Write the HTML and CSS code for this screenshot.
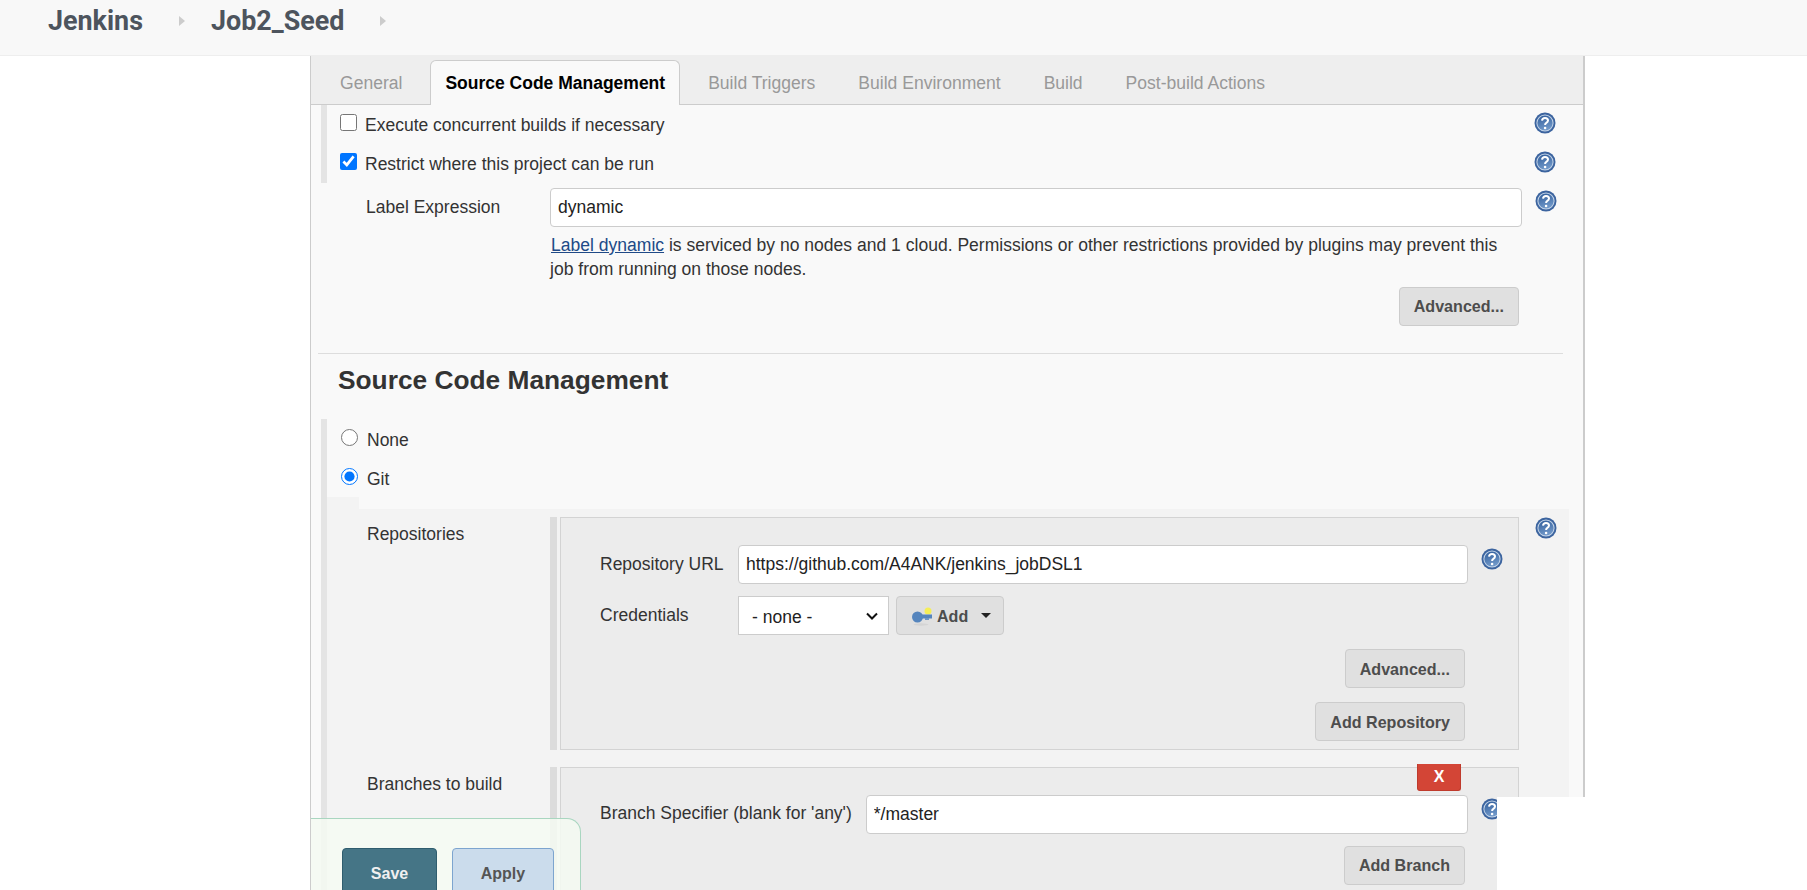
FILE: index.html
```html
<!DOCTYPE html>
<html lang="en">
<head>
<meta charset="utf-8">
<title>Job2_Seed Config</title>
<link rel="stylesheet" href="styles.css">
</head>
<body>
<svg class="defs" width="0" height="0" aria-hidden="true">
  <defs>
    <linearGradient id="helpfill" x1="0" y1="0" x2="0.3" y2="1">
      <stop offset="0" stop-color="#2f5c9a"/>
      <stop offset="1" stop-color="#6f97c8"/>
    </linearGradient>
    <symbol id="help" viewBox="0 0 22 22">
      <circle cx="11" cy="11" r="10.5" fill="#3c649f"/>
      <circle cx="11" cy="11" r="8.6" fill="#c5d5e8"/>
      <circle cx="11" cy="11" r="7.6" fill="url(#helpfill)"/>
      <path d="M8 8.6c.2-1.8 1.4-2.7 3-2.7 1.8 0 3 1 3 2.5 0 1.300-.8 1.900-1.700 2.500-.8.5-1.200 1-1.200 2" fill="none" stroke="#fff" stroke-width="2"/>
      <circle cx="11.100" cy="16" r="1.300" fill="#fff"/>
    </symbol>
  </defs>
</svg>

<header class="topbar">
  <span class="crumb">Jenkins</span>
  <i class="crumb-arrow"></i>
  <span class="crumb">Job2_Seed</span>
  <i class="crumb-arrow"></i>
</header>

<main class="panel">
  <nav class="tabs">
    <span class="tab">General</span>
    <span class="tab tab-active">Source Code Management</span>
    <span class="tab">Build Triggers</span>
    <span class="tab">Build Environment</span>
    <span class="tab">Build</span>
    <span class="tab">Post-build Actions</span>
  </nav>

  <section class="barred">
    <div class="option">
      <input class="check" type="checkbox">
      <span class="option-text">Execute concurrent builds if necessary</span>
      <svg class="help help-end"><use href="#help"/></svg>
    </div>
    <div class="option">
      <input class="check" type="checkbox" checked>
      <span class="option-text">Restrict where this project can be run</span>
      <svg class="help help-end"><use href="#help"/></svg>
    </div>
  </section>

  <section class="label-row">
    <label class="field-label">Label Expression</label>
    <div class="label-main">
      <input class="text-input" type="text" value="dynamic">
      <p class="note"><a href="#">Label dynamic</a> is serviced by no nodes and 1 cloud. Permissions or other restrictions provided by plugins may prevent this job from running on those nodes.</p>
      <div class="actions actions-label"><button class="btn">Advanced...</button></div>
    </div>
    <svg class="help"><use href="#help"/></svg>
  </section>

  <hr class="divider">
  <h2 class="section-title">Source Code Management</h2>

  <section class="barred scm">
    <div class="option">
      <input class="radio" type="radio" name="scm">
      <span class="option-text radio-text">None</span>
    </div>
    <div class="option">
      <input class="radio" type="radio" name="scm" checked>
      <span class="option-text radio-text">Git</span>
    </div>

    <div class="git">
      <div class="git-row">
        <span class="git-label">Repositories</span>
        <div class="box-wrap">
          <div class="box">
            <div class="inner-row">
              <span class="inner-label">Repository URL</span>
              <input class="text-input inner-input" type="text" value="https://github.com/A4ANK/jenkins_jobDSL1">
              <svg class="help help-inner"><use href="#help"/></svg>
            </div>
            <div class="inner-row inner-row-cred">
              <span class="inner-label">Credentials</span>
              <select class="select"><option>- none -</option></select>
              <button class="btn btn-add">
                <svg class="key" viewBox="0 0 20 19" aria-hidden="true">
                  <ellipse cx="9" cy="17.500" rx="7.500" ry="1.200" fill="#d4d4d4"/>
                  <circle cx="16" cy="4" r="3.500" fill="#f5ee58"/>
                  <circle cx="5.500" cy="10" r="5.500" fill="#5585bd"/>
                  <rect x="7" y="7.500" width="13" height="4" fill="#5585bd"/>
                  <rect x="13" y="11" width="4" height="2" fill="#6f97c8"/>
                </svg>
                <span>Add</span>
                <i class="caret"></i>
              </button>
            </div>
            <div class="actions actions-first"><button class="btn btn-low">Advanced...</button></div>
            <div class="actions actions-next"><button class="btn btn-low">Add Repository</button></div>
          </div>
        </div>
        <svg class="help"><use href="#help"/></svg>
      </div>

      <div class="git-row git-row-branch">
        <span class="git-label">Branches to build</span>
        <div class="box-wrap">
          <div class="box box-branch">
            <button class="delete">X</button>
            <div class="inner-row">
              <span class="inner-label-auto">Branch Specifier (blank for 'any')</span>
              <input class="text-input inner-input" type="text" value="*/master">
              <svg class="help help-inner"><use href="#help"/></svg>
            </div>
            <div class="actions actions-branch"><button class="btn">Add Branch</button></div>
          </div>
        </div>
      </div>
    </div>
  </section>
</main>

<div class="mask"></div>

<footer class="savebar">
  <button class="btn-save">Save</button>
  <button class="btn-apply">Apply</button>
</footer>
</body>
</html>
```

FILE: styles.css
```css
* { box-sizing: border-box; }
html, body { height: 890px; overflow: hidden; }
body {
  margin: 0;
  background: #fff;
  color: #333;
  font-family: "Liberation Sans", Arial, sans-serif;
  font-size: 17.5px;
  position: relative;
}
.defs { position: absolute; }

.topbar {
  height: 56px;
  background: #f8f8f8;
  border-bottom: 1px solid #eee;
  display: flex;
  align-items: flex-start;
  padding: 6px 0 0 48px;
}
.crumb {
  font-family: Roboto, "Liberation Sans", sans-serif;
  font-weight: 700;
  font-size: 26.9px;
  line-height: 30px;
  color: #4d545d;
}
.crumb-arrow {
  width: 0;
  height: 0;
  margin: 10px 26px 0 36px;
  border-left: 6px solid #ccc;
  border-top: 5px solid transparent;
  border-bottom: 5px solid transparent;
}

.panel {
  margin-left: 310px;
  width: 1275px;
  height: 834px;
  overflow: hidden;
  background: #f9f9f9;
  border-left: 1px solid #ccc;
  border-right: 2px solid #ccc;
}

.tabs {
  height: 49px;
  background: #eee;
  border-bottom: 1px solid #ccc;
  display: flex;
  padding: 4px 0 0 14px;
}
.tab {
  height: 45px;
  padding: 0 14px;
  margin-right: 13px;
  font-size: 17.55px;
  line-height: 45px;
  color: #999;
  border: 1px solid transparent;
  border-bottom: 0;
}
.tab-active {
  background: #f9f9f9;
  color: #000;
  font-size: 17.5px;
  font-weight: 700;
  border-color: #ccc;
  border-radius: 6px 6px 0 0;
}

.barred {
  margin-left: 10px;
  border-left: 6px solid #e4e4e4;
  padding-left: 0;
}
.option {
  height: 39px;
  padding: 9px 27px 0 13px;
  display: flex;
  align-items: flex-start;
}
.check {
  width: 17px;
  height: 17px;
  margin: 0 8px 0 0;
}
.radio {
  width: 17px;
  height: 17px;
  margin: 1px 9px 0 1px;
}
.option-text { line-height: 22px; }
.radio-text { padding-top: 1px; }

.help { width: 22px; height: 22px; flex: none; display: block; }
.help-end { margin: -2px 0 0 auto; }

.label-row {
  display: flex;
  align-items: flex-start;
  margin-top: 5px;
  padding-left: 55px;
}
.field-label {
  width: 184px;
  flex: none;
  line-height: 20px;
  padding-top: 9px;
}
.label-main { width: 972px; flex: none; margin-right: 13px; }
.label-row .help { margin-top: 2px; }

.text-input {
  display: block;
  width: 100%;
  height: 39px;
  padding: 0 7px;
  border: 1px solid #ccc;
  border-radius: 4px;
  background: #fff;
  color: #222;
  font: 17.5px "Liberation Sans", Arial, sans-serif;
}
.note { margin: 6px 0 0; font-size: 17.55px; line-height: 24px; text-indent: 1px; }
.note a { color: #204a87; }

.actions { display: flex; justify-content: flex-end; }
.actions-label { margin: 6px 3px 0 0; }

.btn {
  height: 39px;
  padding: 0 14px;
  background: #e0e0e0;
  border: 1px solid #ccc;
  border-radius: 4px;
  color: #4d4d4d;
  font: 700 16.08px "Liberation Sans", Arial, sans-serif;
}
.btn-low { padding-top: 2px; }

.divider {
  margin: 27px 20px 0 7px;
  border: 0;
  border-top: 1px solid #ddd;
}
.section-title {
  margin: 11px 0 0 27px;
  height: 54px;
  font-size: 26.3px;
  line-height: 30px;
  color: #333;
}

.scm { margin-right: 0; }

.git {
  margin-right: 14px;
  padding: 20px 0 0 40px;
  background:
    linear-gradient(#f3f3f3, #f3f3f3) 0 0 / 32px 12px no-repeat,
    linear-gradient(#f3f3f3, #f3f3f3) 0 12px / 100% 100% no-repeat;
}
.git-row { display: flex; align-items: flex-start; }
.git-row-branch { margin-top: 17px; }
.git-label {
  width: 183px;
  flex: none;
  line-height: 20px;
  padding-top: 7px;
}
.box-wrap {
  width: 969px;
  flex: none;
  margin-right: 16px;
  border-left: 7px solid #dcdcdc;
  padding-left: 3px;
}
.box {
  position: relative;
  height: 233px;
  padding: 27px 0 0 39px;
  background: #ececec;
  border: 1px solid #d3d3d3;
}
.box-branch { height: 200px; }
.inner-row { display: flex; align-items: flex-start; }
.inner-row-cred { margin-top: 12px; }
.inner-label { width: 138px; flex: none; line-height: 20px; padding-top: 9px; }
.inner-label-auto { flex: none; margin-right: 14px; line-height: 20px; padding-top: 8px; }
.inner-input { flex: 1; width: auto; }
.help-inner { margin: 3px 15px 0 13px; }

.select {
  width: 151px;
  height: 39px;
  padding: 2px 0 0 13px;
  appearance: none;
  background: #fff url("data:image/svg+xml,%3Csvg xmlns='http://www.w3.org/2000/svg' width='12' height='8'%3E%3Cpath d='M1 1.500l5 5 5-5' fill='none' stroke='%23111' stroke-width='2'/%3E%3C/svg%3E") no-repeat right 10px center;
  border: 1px solid #ccc;
  border-radius: 0;
  color: #222;
  font: 17.5px "Liberation Sans", Arial, sans-serif;
}
.btn-add {
  width: 108px;
  margin-left: 7px;
  padding: 2px 0 0 15px;
  display: flex;
  align-items: center;
}
.key { width: 20px; height: 19px; margin: 0 5px 0 0; flex: none; }
.caret {
  margin: -2px 0 0 13px;
  border-top: 5px solid #222;
  border-left: 5px solid transparent;
  border-right: 5px solid transparent;
}
.actions-first { margin: 14px 53px 0 0; }
.actions-next { margin: 14px 53px 0 0; }
.actions-branch { margin: 12px 53px 0 0; }

.delete {
  position: absolute;
  top: -4px;
  right: 57px;
  width: 44px;
  height: 27px;
  padding: 0;
  background: #d34536;
  border: 1px solid #bf3a2c;
  border-top: 0;
  border-radius: 0 0 3px 3px;
  color: #fff;
  font: 700 16px "Liberation Sans", Arial, sans-serif;
}

.mask {
  position: absolute;
  left: 1497px;
  right: 0;
  top: 797px;
  bottom: 0;
  background: #fff;
}

.savebar {
  position: absolute;
  left: 311px;
  top: 818px;
  width: 270px;
  height: 72px;
  overflow: hidden;
  padding: 29px 0 0 31px;
  display: flex;
  align-items: flex-start;
  gap: 15px;
  background: rgba(244, 250, 242, .85);
  border: 1px solid #a9d6c0;
  border-width: 1px 1px 0 0;
  border-radius: 0 14px 0 0;
}
.btn-save, .btn-apply {
  height: 52px;
  flex: none;
  border-radius: 4px;
  font: 700 16px "Liberation Sans", Arial, sans-serif;
}
.btn-save {
  width: 95px;
  background: #457586;
  border: 1px solid #2f5d6e;
  color: #f0f0f0;
}
.btn-apply {
  width: 102px;
  background: #cbdcec;
  border: 1px solid #7da5cf;
  color: #555;
}
```
